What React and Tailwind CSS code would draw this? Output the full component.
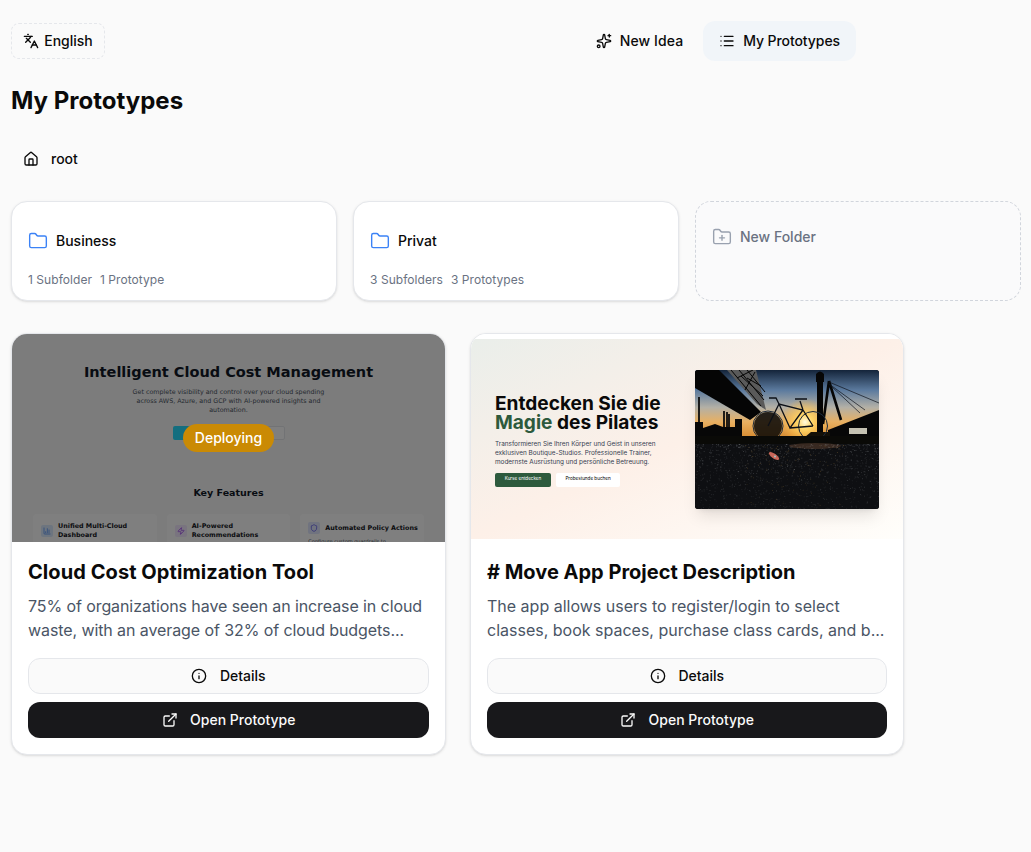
import { ChartColumn, ExternalLink, Folder, FolderPlus, House, Info, Languages, List, Shield, Sparkles, Zap } from 'lucide-react'

// road surface of the photo, a fixed scatter of tiny stones
const specks = Array.from({ length: 1500 }).map((_, i) => {
  const a = Math.sin(i * 12.9898) * 43758.5453
  const b = Math.sin(i * 78.233) * 12543.123
  const c = Math.sin(i * 37.719) * 9631.77
  const x = (a - Math.floor(a)) * 184
  const t = b - Math.floor(b)
  const y = 74 + Math.pow(t, 1.4) * 65
  const warm = i % 6 === 0 && x > 50 && x < 150
  return { x, y, warm, o: (0.08 + (c - Math.floor(c)) * 0.45) * (1 - t * 0.5) }
})

function BikePhoto() {
  return (
    <svg viewBox="0 0 184 139" className="w-full h-full block" preserveAspectRatio="none">
      <defs>
        <linearGradient id="sky" x1="0" y1="0" x2="0" y2="1">
          <stop offset="0" stopColor="#14243a" />
          <stop offset="0.28" stopColor="#5b7a9e" />
          <stop offset="0.52" stopColor="#b3b0a6" />
          <stop offset="0.72" stopColor="#e8b062" />
          <stop offset="0.92" stopColor="#d98f35" />
        </linearGradient>
        <radialGradient id="sun">
          <stop offset="0" stopColor="#fffbe0" />
          <stop offset="0.3" stopColor="#ffd668" />
          <stop offset="1" stopColor="#ffb43a" stopOpacity="0" />
        </radialGradient>
      </defs>
      <rect width="184" height="139" fill="#050505" />
      <rect width="184" height="72" fill="url(#sky)" />
      <circle cx="110" cy="52" r="24" fill="url(#sun)" />
      {/* bridge on the left */}
      <path d="M0 0H24L66 42L55 50L0 18Z" fill="#050505" />
      <path d="M32 0H61L71 40L62 34Z" fill="#5a5a5a" />
      <path d="M36 0L66 36M44 0L69 30M52 0L70 22M60 2L50 20M66 16L52 8M68 26L46 6M58 0L42 8" stroke="#050505" strokeWidth="1" fill="none" />
      <path d="M4 27V62M29 41V64M32 42V64M34 44V62" stroke="#0d0d0d" strokeWidth="1.8" />
      <path d="M0 52H8V58L20 54L28 57H40V49H47V72H0Z" fill="#070707" />
      {/* pylon and cables on the right */}
      <path d="M121 4Q125 -1 129 4V12H128V72H122V12H121Z" fill="#060606" />
      <path d="M134 11L128 54M134 11L146 50" stroke="#060606" strokeWidth="2.6" fill="none" />
      <path d="M134 12L184 33M136 16L165 43M134 14L170 40" stroke="#10141c" strokeWidth="0.7" fill="none" />
      <path d="M133 60L184 40V72H133Z" fill="#070707" />
      <rect x="154" y="58" width="18" height="6" fill="#c5c2b2" />
      <path d="M104 72L116 62H135V72Z" fill="#141008" />
      {/* bike */}
      <circle cx="73" cy="56" r="14" fill="#060606" fillOpacity="0.85" />
      <g fill="none" stroke="#1d2b3c" strokeWidth="1">
        <circle cx="73" cy="56" r="15" />
        <circle cx="118" cy="56" r="14.5" />
      </g>
      <g fill="none" stroke="#0c1017" strokeWidth="1.3">
        <path d="M73 56L84 34L108 40L118 56M108 40L95 58L84 34M95 58L118 56M108 40L105 31" />
        <path d="M84 34L81 28H74M100 29H112" />
      </g>
      <rect y="66" width="184" height="8" fill="#0a0a07" />
      <rect y="74" width="184" height="65" fill="#0e0f12" />
      <ellipse cx="120" cy="76" rx="26" ry="3" fill="#4a3528" fillOpacity="0.7" />
      {specks.map((s, i) => (
        <rect key={i} x={s.x} y={s.y} width="0.9" height="0.9" fill={s.warm ? '#b08a45' : '#83868a'} fillOpacity={s.o} />
      ))}
      <ellipse cx="79" cy="86" rx="6" ry="2.3" transform="rotate(35 79 86)" fill="#c8665a" />
      <circle cx="80" cy="86.5" r="1" fill="#9fc9c6" />
    </svg>
  )
}

function CloudFeature({ title, icon, bg, children }) {
  return (
    <div className="flex-1 min-w-0 h-[40px] rounded-[4px] bg-white px-2 pt-2 overflow-hidden">
      <div className="flex items-center gap-[5px]">
        <div className={`w-3 h-3 shrink-0 rounded-[2px] flex items-center justify-center ${bg}`}>
          {icon}
        </div>
        <div className="text-[6.4px] leading-[9px] font-bold text-[#14161c]">{title}</div>
      </div>
      {children}
    </div>
  )
}

function CloudThumb() {
  return (
    <div className="relative h-[208px] overflow-hidden bg-[#f8f8f8]">
      <div className="h-full flex flex-col items-center pt-[29px] px-[21px] font-['DejaVu_Sans',sans-serif]">
        <div className="text-[14.5px] leading-[18px] font-bold text-[#111827]">Intelligent Cloud Cost Management</div>
        <div className="mt-[6px] w-[210px] text-center text-[6.35px] leading-[9px] text-[#4b5563]">
          Get complete visibility and control over your cloud spending across AWS, Azure, and GCP with AI-powered insights and automation.
        </div>
        <div className="mt-[12px] flex gap-1">
          <div className="w-[56px] h-[14px] rounded-[2px] bg-[#28dcff]" />
          <div className="w-[52px] h-[14px] rounded-[2px] border border-[#e5e7eb] bg-white" />
        </div>
        <div className="mt-[47px] text-[9.5px] leading-[12px] font-bold text-[#111827]">Key Features</div>
        <div className="mt-[15px] w-full flex gap-[10px]">
          <CloudFeature title="Unified Multi-Cloud Dashboard" bg="bg-[#dbeafe]" icon={<ChartColumn size={8} className="text-[#3b82f6]" />} />
          <CloudFeature title="AI-Powered Recommendations" bg="bg-[#f3e8ff]" icon={<Zap size={8} className="text-[#9333ea]" />} />
          <CloudFeature title={<span className="whitespace-nowrap">Automated Policy Actions</span>} bg="bg-[#e0e7ff]" icon={<Shield size={8} className="text-[#4f46e5]" />}>
            <div className="mt-[3px] text-[5px] leading-[8px] text-[#4b5563] whitespace-nowrap">Configure custom guardrails to</div>
          </CloudFeature>
        </div>
      </div>
      <div className="absolute inset-0 bg-black/50 flex items-center justify-center">
        <div className="h-7 px-3 rounded-full bg-[#ca8a04] text-white text-sm font-medium flex items-center">Deploying</div>
      </div>
    </div>
  )
}

function PilatesThumb() {
  return (
    <div className="h-[208px] bg-white pt-[5px]">
      <div className="h-[200px] flex items-center pl-6 pr-6 bg-gradient-to-br from-[#eaeeea] via-[#fdf0e8] to-[#fffefb]">
        <div className="w-[200px] shrink-0 mt-[2px]">
          <div className="text-[19.1px] leading-[19.5px] font-bold text-[#0a0a0a]">
            Entdecken Sie die<br /><span className="text-[#2d5a3d]">Magie</span> des Pilates
          </div>
          <div className="mt-[7px] text-[6.4px] leading-[9px] text-[#374151]">
            Transformieren Sie Ihren Körper und Geist in unseren<br />
            exklusiven Boutique-Studios. Professionelle Trainer,<br />
            modernste Ausrüstung und persönliche Betreuung.
          </div>
          <div className="mt-[6px] flex gap-[5px]">
            <div className="w-[56px] h-[14px] rounded-[2px] bg-[#2d5a3d] text-white text-[4.6px] flex items-center justify-center">Kurse entdecken</div>
            <div className="w-[64px] h-[14px] rounded-[2px] bg-white text-black text-[4.6px] flex items-center justify-center">Probestunde buchen</div>
          </div>
        </div>
        <div className="w-[184px] h-[139px] rounded-[3px] overflow-hidden shadow-lg">
          <BikePhoto />
        </div>
      </div>
    </div>
  )
}

function FolderCard({ name, subfolders, prototypes }) {
  return (
    <div className="h-[100px] rounded-2xl border border-gray-200 bg-white shadow-sm pt-[29px] px-4">
      <div className="flex items-center gap-2 h-5">
        <Folder size={20} strokeWidth={1.67} className="text-[#3b82f6]" />
        <span className="text-sm font-medium text-[#0a0a0a]">{name}</span>
      </div>
      <div className="mt-[21px] flex gap-2 text-xs tracking-[0.05px] text-gray-500">
        <span>{subfolders}</span>
        <span>{prototypes}</span>
      </div>
    </div>
  )
}

function PrototypeCard({ thumb, title, description, titleClass = '', descClass = '' }) {
  return (
    <div className="rounded-2xl border border-gray-200 bg-white shadow-sm overflow-hidden">
      {thumb}
      <div className="p-4">
        <h3 className={`text-xl font-bold leading-7 text-[#0a0a0a] ${titleClass}`}>{title}</h3>
        <p className={`mt-2 text-base leading-6 text-gray-600 ${descClass}`}>{description}</p>
        <div className="mt-4 flex flex-col gap-2">
          <button className="h-9 rounded-xl border border-gray-200 bg-[#fafafa] flex items-center justify-center gap-[12.5px] text-sm font-medium text-[#0a0a0a]">
            <Info size={16} />
            Details
          </button>
          <button className="h-9 rounded-xl bg-[#18181b] flex items-center justify-center gap-[12.5px] text-sm font-medium text-[#fafafa]">
            <ExternalLink size={16} />
            Open Prototype
          </button>
        </div>
      </div>
    </div>
  )
}

export default function App() {
  return (
    <div className="min-h-[852px] bg-[#fafafa] font-['Inter',sans-serif] px-[11px] pt-[21px] text-[#0a0a0a]">
      <header className="flex items-center justify-between h-10 w-[845px]">
        <button className="h-9 w-[94px] rounded-lg border border-dashed border-gray-200 flex items-center justify-center gap-[5px] text-sm font-medium">
          <Languages size={16} />
          English
        </button>
        <nav className="flex gap-1">
          <button className="h-10 px-4 rounded-xl flex items-center gap-2 text-sm font-medium tracking-[0.1px]">
            <Sparkles size={16} />
            New Idea
          </button>
          <button className="h-10 px-4 rounded-xl bg-[#f1f5f9] flex items-center gap-2 text-sm font-medium tracking-[-0.08px]">
            <List size={16} />
            My Prototypes
          </button>
        </nav>
      </header>

      <h1 className="mt-[24px] text-2xl leading-8 font-bold">My Prototypes</h1>

      <div className="mt-[32px] h-5 pl-[12px] flex items-center gap-[12px] text-sm font-medium">
        <House size={16} />
        root
      </div>

      <div className="mt-[32px] grid grid-cols-3 gap-4 w-[1010px]">
        <FolderCard name="Business" subfolders="1 Subfolder" prototypes="1 Prototype" />
        <FolderCard name="Privat" subfolders="3 Subfolders" prototypes="3 Prototypes" />
        <div className="h-[100px] rounded-2xl border border-dashed border-gray-300 bg-[#fafafb] pt-[25px] px-4">
          <div className="flex items-center gap-2 h-5 text-sm font-medium text-gray-500">
            <FolderPlus size={20} strokeWidth={1.67} className="text-gray-400" />
            New Folder
          </div>
        </div>
      </div>

      <div className="mt-[32px] grid grid-cols-[435px_434px] gap-6">
        <PrototypeCard
          thumb={<CloudThumb />}
          title="Cloud Cost Optimization Tool"
          titleClass="tracking-[0.07px]"
          descClass="tracking-[-0.09px]"
          description="75% of organizations have seen an increase in cloud waste, with an average of 32% of cloud budgets..."
        />
        <PrototypeCard
          thumb={<PilatesThumb />}
          title="# Move App Project Description"
          description="The app allows users to register/login to select classes, book spaces, purchase class cards, and b..."
        />
      </div>
    </div>
  )
}
